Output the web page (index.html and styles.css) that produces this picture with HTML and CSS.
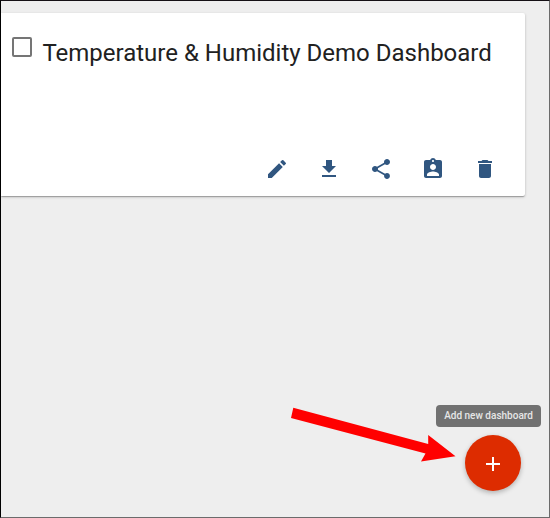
FILE: index.html
```html
<!DOCTYPE html>
<html lang="en">
<head>
<meta charset="utf-8">
<title>Dashboards</title>
<link rel="stylesheet" href="styles.css">
</head>
<body>
<main class="page">
  <article class="card">
    <header class="card-header">
      <span class="checkbox" role="checkbox" aria-checked="false"></span>
      <h1 class="title">Temperature &amp; Humidity Demo Dashboard</h1>
    </header>
    <div class="actions">
      <svg class="icon" viewBox="0 0 24 24"><path d="M3 17.25V21h3.75L17.81 9.94l-3.75-3.75L3 17.25zM20.71 7.04a1 1 0 0 0 0-1.41l-2.34-2.34a1 1 0 0 0-1.41 0l-1.83 1.83 3.75 3.75 1.83-1.83z"/></svg>
      <svg class="icon" viewBox="0 0 24 24"><path d="M19 9h-4V3H9v6H5l7 7 7-7zM5 18v2h14v-2H5z"/></svg>
      <svg class="icon" viewBox="0 0 24 24"><path d="M18 16.08c-.76 0-1.44.3-1.96.77L8.91 12.7c.05-.23.09-.46.09-.7s-.04-.47-.09-.7l7.05-4.11c.54.5 1.25.81 2.04.81 1.66 0 3-1.34 3-3s-1.34-3-3-3-3 1.34-3 3c0 .24.04.47.09.7L8.04 9.81C7.5 9.31 6.79 9 6 9c-1.66 0-3 1.34-3 3s1.34 3 3 3c.79 0 1.5-.31 2.04-.81l7.12 4.16c-.05.21-.08.43-.08.65 0 1.61 1.31 2.92 2.92 2.92s2.92-1.31 2.92-2.92-1.31-2.92-2.92-2.92z"/></svg>
      <svg class="icon" viewBox="0 0 24 24"><path d="M19 3h-4.18C14.4 1.84 13.3 1 12 1s-2.4.84-2.82 2H5c-1.1 0-2 .9-2 2v14c0 1.100.9 2 2 2h14c1.100 0 2-.9 2-2V5c0-1.100-.9-2-2-2zm-7 0c.55 0 1 .45 1 1s-.45 1-1 1-1-.45-1-1 .45-1 1-1zm0 4c1.660 0 3 1.340 3 3s-1.340 3-3 3-3-1.340-3-3 1.340-3 3-3zm6 12H6v-1.400c0-2 4-3.100 6-3.100s6 1.100 6 3.100V19z"/></svg>
      <svg class="icon" viewBox="0 0 24 24"><path d="M6 19c0 1.100.9 2 2 2h8c1.100 0 2-.9 2-2V7H6v12zM19 4h-3.500l-1-1h-5l-1 1H5v2h14V4z"/></svg>
    </div>
  </article>
  <div class="add-area">
    <div class="tooltip">Add new dashboard</div>
    <button class="fab" aria-label="Add new dashboard">
      <svg class="plus" viewBox="0 0 24 24"><path d="M19 13h-6v6h-2v-6H5v-2h6V5h2v6h6v2z"/></svg>
    </button>
  </div>
  <svg class="arrow" viewBox="0 0 168 58"><path d="M4.300 2.800L139.200 39V30L166.500 51.200L132 56.500L136.500 48.500L2 13Z"/></svg>
</main>
</body>
</html>
```

FILE: styles.css
```css
* {
  box-sizing: border-box;
}

body {
  margin: 0;
  font-family: Roboto, sans-serif;
}

.page {
  position: relative;
  display: flex;
  flex-direction: column;
  justify-content: space-between;
  height: 518px;
  padding-top: 12px;
  overflow: hidden;
  background: #eee;
  border: 1px solid #6b6b6b;
  border-top-color: #151015;
  border-left-color: #000;
}

.card {
  display: flex;
  flex-direction: column;
  justify-content: space-between;
  width: 524px;
  height: 183px;
  padding: 24px 28px 15px 11px;
  background: #fff;
  border-radius: 0 2px 2px 0;
  box-shadow: 0 1px 3px rgba(0, 0, 0, .2), 0 1px 1px rgba(0, 0, 0, .14), 0 2px 1px -1px rgba(0, 0, 0, .12);
}

.card-header {
  display: flex;
  gap: 10.4px;
}

.checkbox {
  flex: none;
  width: 20px;
  height: 20px;
  border: 2px solid #757575;
  border-radius: 2px;
}

.title {
  margin: 0;
  color: #212121;
  font-size: 24px;
  font-weight: 400;
  line-height: 32px;
  white-space: nowrap;
}

.actions {
  display: flex;
  justify-content: flex-end;
  gap: 28px;
}

.icon {
  width: 24px;
  height: 24px;
  fill: #305680;
}

.add-area {
  display: flex;
  flex-direction: column;
  align-items: flex-end;
  gap: 8px;
  padding: 0 8px 26px 0;
}

.tooltip {
  width: 105px;
  height: 22px;
  border-radius: 4px;
  background: #717171;
  color: #e6e6e6;
  font-size: 10px;
  font-weight: 500;
  line-height: 22px;
  text-align: center;
  white-space: nowrap;
}

.fab {
  display: grid;
  place-items: center;
  width: 56px;
  height: 56px;
  margin-right: 20px;
  padding: 2px 0 0;
  border: 0;
  border-radius: 50%;
  background: #dd2c00;
  box-shadow: 0 2px 5px rgba(0, 0, 0, .26);
}

.plus {
  width: 24px;
  height: 24px;
  fill: #fff;
}

.arrow {
  position: absolute;
  left: 288px;
  top: 404px;
  width: 168px;
  height: 58px;
  fill: #f00;
}
```
